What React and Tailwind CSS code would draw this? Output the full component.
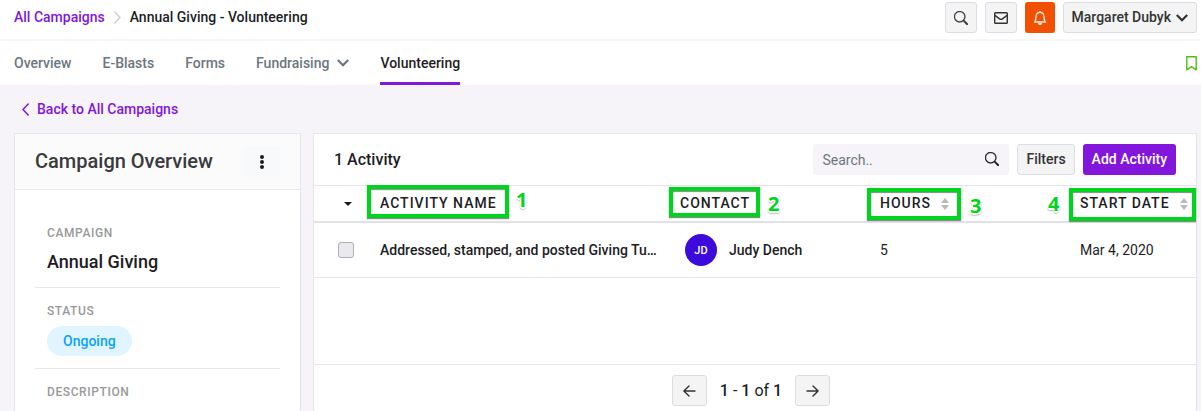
import React, { useState } from 'react';
import { BsBell, BsSearch } from 'react-icons/bs';

const TABS = ['Overview', 'E-Blasts', 'Forms', 'Fundraising', 'Volunteering'];

const ACTIVITIES = [
    {
        id: 1,
        name: 'Addressed, stamped, and posted Giving Tu…',
        initials: 'JD',
        contact: 'Judy Dench',
        hours: 5,
        date: 'Mar 4, 2020'
    }
];

const iconButton = 'flex h-[31px] items-center justify-center rounded-[3px] border border-[#dcdce6] bg-[#f4f4f4] text-[#333]';

function MailIcon() {
    return (
        <svg width="14" height="12" viewBox="0 0 14 12" fill="none" stroke="currentColor" strokeWidth="1.4">
            <rect x="0.7" y="0.7" width="12.6" height="10.6" rx="0.8" />
            <path d="M1 3.4 L5.6 6.8 Q7 7.7 8.4 6.8 L13 3.4" />
        </svg>
    );
}

function BookmarkIcon() {
    return (
        <svg width="11" height="15" viewBox="0 0 11 15" fill="none" stroke="currentColor" strokeWidth="1.4" strokeLinejoin="round">
            <path d="M0.8 0.8 H10.2 V13.8 L5.5 10.6 L0.8 13.8 Z" />
        </svg>
    );
}

function ChevronDown() {
    return (
        <svg width="12" height="8" viewBox="0 0 12 8" fill="none" stroke="currentColor" strokeWidth="2.2">
            <path d="M0.8 1 L6 6.2 L11.2 1" />
        </svg>
    );
}

function ChevronSide({ className }) {
    return (
        <svg className={className} width="7" height="13" viewBox="0 0 7 13" fill="none" stroke="currentColor" strokeWidth="1.5" strokeLinecap="round" strokeLinejoin="round">
            <path d="M6.2 1 L1 6.5 L6.2 12" />
        </svg>
    );
}

function SortIcon() {
    return (
        <svg width="8" height="12" viewBox="0 0 8 12" fill="#b9b9be">
            <path d="M4 0 L8 5 H0 Z" />
            <path d="M4 12 L0 7 H8 Z" />
        </svg>
    );
}

function ArrowIcon({ className }) {
    return (
        <svg className={className} width="13" height="12" viewBox="0 0 13 12" fill="none" stroke="currentColor" strokeWidth="1.4" strokeLinecap="round" strokeLinejoin="round">
            <path d="M12 6 H1 M6 1 L0.9 6 L6 11" />
        </svg>
    );
}

// Green outline drawn over a column heading, with its step number beside it
function Callout({ number, boxClass, numberClass }) {
    return (
        <>
            <span className={`pointer-events-none absolute border-4 border-[#00d41f] shadow-[0_1px_1px_#888,inset_0_1px_1px_#888] ${boxClass}`}></span>
            <span className={`pointer-events-none absolute font-['Open_Sans',sans-serif] text-xl leading-5 font-bold tracking-normal text-[#00d41f] [text-shadow:-1px_-1px_0_#fff,1px_-1px_0_#fff,-1px_1px_0_#fff,1px_1px_0_#fff,0_2px_0_#fff,0_2px_2px_#333] ${numberClass}`}>
                {number}
            </span>
        </>
    );
}

function TopBar() {
    return (
        <header className="flex items-center justify-between border-b-2 border-[#f8f8fa] pt-0.5 pr-1 pb-1.5 pl-3.5">
            <nav aria-label="Breadcrumb" className="flex items-center gap-[9px]">
                <a href="#campaigns" className="text-[#8216db]">All Campaigns</a>
                <ChevronSide className="rotate-180 text-[#ccd0d8]" />
                <span>Annual Giving - Volunteering</span>
            </nav>
            <div className="flex gap-2">
                <button aria-label="Search" className={`${iconButton} w-8`}>
                    <BsSearch size={14} strokeWidth={0.4} />
                </button>
                <button aria-label="Messages" className={`${iconButton} w-8`}>
                    <MailIcon />
                </button>
                <button aria-label="Notifications" className="flex h-[31px] w-[30px] items-center justify-center rounded-[3px] bg-[#f25000] text-white">
                    <BsBell size={14} strokeWidth={0.4} />
                </button>
                <button className={`${iconButton} gap-[5px] px-2`}>
                    Margaret Dubyk
                    <ChevronDown />
                </button>
            </div>
        </header>
    );
}

function TabBar() {
    const [activeTab, setActiveTab] = useState('Volunteering');

    return (
        <div className="flex h-11 items-center justify-between bg-white pr-1 pl-3.5">
            <nav aria-label="Campaign" className="flex h-full gap-[31px]">
                {TABS.map(tab => (
                    <button
                        key={tab}
                        onClick={() => setActiveTab(tab)}
                        className={`flex items-center gap-2 border-y-3 border-t-transparent ${
                            activeTab === tab
                                ? 'border-b-[#8216db] text-[#1d1d1f]'
                                : 'border-b-transparent text-[#6c7680]'
                        }`}
                    >
                        {tab}
                        {tab === 'Fundraising' && <ChevronDown />}
                    </button>
                ))}
            </nav>
            <button aria-label="Bookmark" className="text-[#4fbf17]">
                <BookmarkIcon />
            </button>
        </div>
    );
}

function Overview() {
    const label = 'text-xs leading-4 tracking-wider text-[#999]';

    return (
        <aside className="w-[287px] shrink-0 border border-b-0 border-[#e6e5ea] bg-white">
            <div className="flex items-center justify-between border-b border-[#e6e5ea] bg-[#fbfbfb] px-5 py-3">
                <h2 className="text-xl leading-[31px] text-[#3a3a3c]">Campaign Overview</h2>
                <button aria-label="Campaign options" className="flex h-[31px] w-9 items-center justify-center bg-[#f8f9fa]">
                    <svg width="4" height="14" viewBox="0 0 4 14" fill="#1d1d1f">
                        <circle cx="2" cy="2" r="2" />
                        <circle cx="2" cy="7" r="2" />
                        <circle cx="2" cy="12" r="2" />
                    </svg>
                </button>
            </div>
            <div className="px-5 pt-5">
                <div className="border-b border-[#e6e5ea] px-3 pt-[15px] pb-[13px]">
                    <h3 className={label}>CAMPAIGN</h3>
                    <p className="mt-[9px] text-lg leading-6">Annual Giving</p>
                </div>
                <div className="border-b border-[#e6e5ea] px-3 pt-[15px] pb-3">
                    <h3 className={label}>STATUS</h3>
                    <p className="mt-[7px] w-fit rounded-full bg-[#e0f5ff] px-4 leading-[30px] text-[#0aa2fa]">Ongoing</p>
                </div>
                <div className="px-3 pt-[15px]">
                    <h3 className={label}>DESCRIPTION</h3>
                </div>
            </div>
        </aside>
    );
}

function ActivityTable() {
    const heading = 'relative h-[37px] border-b-2 border-[#e2e1e7] pl-3 text-left font-medium tracking-[1px]';

    return (
        <table className="w-full table-fixed border-separate border-spacing-0">
            <thead>
                <tr>
                    <th className="w-[54px] border-b-2 border-[#e2e1e7] pl-[30px]">
                        <button aria-label="Select activities" className="block">
                            <svg width="8" height="4" viewBox="0 0 8 4" fill="#1d1d1f">
                                <path d="M0 0 H8 L4 4 Z" />
                            </svg>
                        </button>
                    </th>
                    <th className={heading}>
                        ACTIVITY NAME
                        <Callout number="1" boxClass="-top-px -left-px h-[33px] w-[142px]" numberClass="top-1 left-[148px]" />
                    </th>
                    <th className={`${heading} w-[200px]`}>
                        CONTACT
                        <Callout number="2" boxClass="top-px left-px h-[30px] w-[91px]" numberClass="top-2 left-[100px]" />
                    </th>
                    <th className={`${heading} w-[200px]`}>
                        <button className="flex items-center gap-2.5 tracking-[1px]">
                            HOURS
                            <SortIcon />
                        </button>
                        <Callout number="3" boxClass="top-0.5 -left-px h-8 w-[94px]" numberClass="top-2.5 left-[102px]" />
                    </th>
                    <th className={`${heading} w-[128px]`}>
                        <button className="flex items-center gap-2.5 tracking-[1px] whitespace-nowrap">
                            START DATE
                            <SortIcon />
                        </button>
                        <Callout number="4" boxClass="top-0.5 left-px h-[33px] w-[127px]" numberClass="top-2 -left-5" />
                    </th>
                </tr>
            </thead>
            <tbody>
                {ACTIVITIES.map(activity => (
                    <tr key={activity.id} className="[&>td]:h-[55px] [&>td]:border-b [&>td]:border-[#e6e5ea]">
                        <td className="pl-6">
                            <input
                                type="checkbox"
                                aria-label={activity.name}
                                className="block size-4 appearance-none rounded-[3px] border border-[#a9b0bb] bg-[#ebe8ee] checked:bg-[#8216db]"
                            />
                        </td>
                        <td className="truncate pr-1 pl-3">{activity.name}</td>
                        <td className="pl-[17px]">
                            <div className="flex items-center gap-3">
                                <span className="flex size-8 items-center justify-center rounded-full bg-[#3c0adb] text-[11px] text-white">
                                    {activity.initials}
                                </span>
                                {activity.contact}
                            </div>
                        </td>
                        <td className="pl-3 font-normal">{activity.hours}</td>
                        <td className="pl-3 font-normal">{activity.date}</td>
                    </tr>
                ))}
            </tbody>
        </table>
    );
}

function Activities() {
    return (
        <main className="flex min-w-0 flex-1 flex-col border border-b-0 border-[#e6e5ea] bg-white">
            <div className="flex items-center justify-between border-b border-[#e6e5ea] px-5 py-2.5">
                <h1 className="text-base leading-[31px]">1 Activity</h1>
                <div className="flex gap-2">
                    <div className="relative">
                        <input
                            type="search"
                            aria-label="Search activities"
                            placeholder="Search.."
                            className="h-[31px] w-[196px] rounded-[3px] bg-[#f6f4f8] pr-8 pl-[9px] font-normal placeholder:text-[#6c7680]"
                        />
                        <BsSearch className="absolute top-2 right-2.5" size={14} strokeWidth={0.4} />
                    </div>
                    <button className={`${iconButton} px-2`}>Filters</button>
                    <button className="h-[31px] rounded-[3px] bg-[#8216db] px-[9px] text-white">Add Activity</button>
                </div>
            </div>
            <ActivityTable />
            <div className="min-h-[86px] flex-1"></div>
            <div className="flex items-center justify-center gap-[13px] border-t border-[#e6e5ea] pt-2.5 pr-2 pb-[5px]">
                <button aria-label="Previous page" className={`${iconButton} w-[35px]`}>
                    <ArrowIcon />
                </button>
                <span className="text-base leading-[31px] font-normal">
                    <b className="font-medium">1</b> - <b className="font-medium">1</b> of <b className="font-medium">1</b>
                </span>
                <button aria-label="Next page" className={`${iconButton} w-[35px]`}>
                    <ArrowIcon className="rotate-180" />
                </button>
            </div>
        </main>
    );
}

function App() {
    return (
        <div className="flex min-h-screen flex-col bg-[#f6f4f8] font-['Roboto',sans-serif] text-sm/[21px] font-medium text-[#1d1d1f]">
            <div className="bg-white">
                <TopBar />
                <TabBar />
            </div>
            <div className="flex flex-1 flex-col pr-1 pl-3.5">
                <a href="#campaigns" className="flex h-12 w-fit items-center gap-2 pl-2 text-[#8216db]">
                    <ChevronSide />
                    Back to All Campaigns
                </a>
                <div className="flex flex-1 gap-3">
                    <Overview />
                    <Activities />
                </div>
            </div>
        </div>
    );
}

export default App;
